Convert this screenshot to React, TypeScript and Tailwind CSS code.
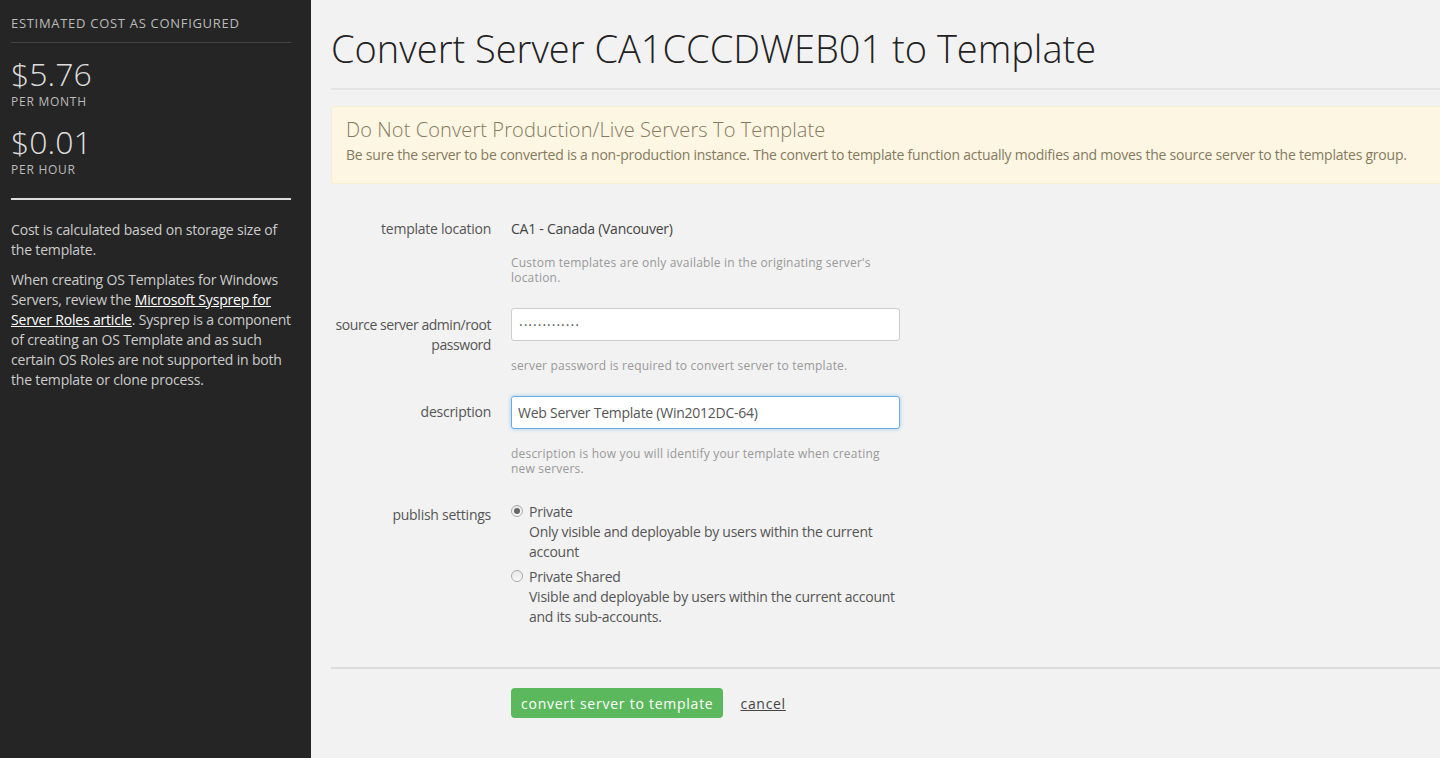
function Radio({ checked }: { checked?: boolean }) {
  return (
    <span className="mt-[3px] flex h-[12px] w-[12px] shrink-0 items-center justify-center rounded-full border border-[#aaa] bg-gradient-to-b from-[#e8e8e8] to-[#fafafa]">
      {checked && <span className="h-[6px] w-[6px] rounded-full bg-[#666]" />}
    </span>
  );
}

export default function App() {
  return (
    <div
      className="flex min-h-[758px] w-full bg-[#f2f2f2] text-[#333]"
      style={{ fontFamily: '"Open Sans", sans-serif' }}
    >
      <aside className="w-[311px] shrink-0 bg-[#252525] px-[11px] pt-[14px] text-[#ccc]">
        <div className="w-[280px]">
          <div className="text-[13px] uppercase leading-[18px] tracking-[0.7px] text-[#bbb]">
            Estimated cost as configured
          </div>
          <div className="mt-[10px] border-t border-[#444]" />
          <div className="mt-[13px] text-[32px] font-light leading-[36px] text-[#ddd]">$5.76</div>
          <div className="mt-[2px] text-[12px] uppercase leading-[16px] tracking-[0.75px] text-[#bbb]">per month</div>
          <div className="mt-[14px] text-[32px] font-light leading-[36px] text-[#ddd]">$0.01</div>
          <div className="mt-[2px] text-[12px] uppercase leading-[16px] tracking-[0.75px] text-[#bbb]">per hour</div>
          <div className="mt-[20px] border-t-2 border-[#ddd]" />
          <p className="mt-[20px] text-[14px] leading-[20px] tracking-[-0.18px]">
            Cost is calculated based on storage size of the template.
          </p>
          <p className="mt-[10px] text-[14px] leading-[20px] tracking-[-0.18px]">
            When creating OS Templates for Windows Servers, review the{" "}
            <a href="#" className="text-white underline">
              Microsoft Sysprep for Server Roles article
            </a>
            . Sysprep is a component of creating an OS Template and as such certain OS Roles are not
            supported in both the template or clone process.
          </p>
        </div>
      </aside>

      <main className="min-w-0 flex-1 overflow-hidden pl-[20px] pt-[24px]">
        <h1 className="text-[38px] font-light leading-[48px] text-[#222]">
          Convert Server CA1CCCDWEB01 to Template
        </h1>
        <div className="mt-[16px] border-t-2 border-[#e4e4e4]" />

        <div className="mt-[16px] rounded-l-[3px] border border-r-0 border-[#f7edcf] bg-[#fcf6e3] px-[14px] pb-[18px] pt-[9px]">
          <div className="text-[20px] font-light leading-[28px] tracking-[0.1px] text-[#857a5e]">
            Do Not Convert Production/Live Servers To Template
          </div>
          <div className="mt-[1px] whitespace-nowrap text-[14px] leading-[20px] tracking-[-0.23px] text-[#857a5e]">
            Be sure the server to be converted is a non-production instance. The convert to template
            function actually modifies and moves the source server to the templates group.
          </div>
        </div>

        <div className="mt-[35px] flex flex-col text-[14px] tracking-[-0.25px]">
          <div className="flex gap-[20px]">
            <div className="w-[160px] shrink-0 text-right leading-[20px] text-[#555]">template location</div>
            <div className="w-[389px]">
              <div className="leading-[20px] text-[#444]">CA1 - Canada (Vancouver)</div>
              <div className="mt-[16px] text-[12px] leading-[15px] tracking-[0.2px] text-[#999]">
                Custom templates are only available in the originating server's location.
              </div>
            </div>
          </div>

          <div className="mt-[23px] flex gap-[20px]">
            <div className="w-[160px] shrink-0 pt-[7px] text-right leading-[20px] tracking-[-0.45px] text-[#555]">
              source server admin/root password
            </div>
            <div className="w-[389px]">
              <input
                type="text"
                readOnly
                value="·············"
                className="h-[33px] w-full rounded-[3px] border border-[#ccc] bg-white px-[7px] text-[14px] tracking-[1px] text-[#555] outline-none"
              />
              <div className="mt-[17px] text-[12px] leading-[15px] tracking-[0.2px] text-[#999]">
                server password is required to convert server to template.
              </div>
            </div>
          </div>

          <div className="mt-[23px] flex gap-[20px]">
            <div className="w-[160px] shrink-0 pt-[6px] text-right leading-[20px] text-[#555]">description</div>
            <div className="w-[389px]">
              <input
                type="text"
                defaultValue="Web Server Template (Win2012DC-64)"
                className="h-[33px] w-full rounded-[3px] border border-[#66afe9] bg-white px-[6px] text-[14px] tracking-[-0.25px] text-[#555] shadow-[0_0_4px_rgba(102,175,233,0.6)] outline-none"
              />
              <div className="mt-[17px] text-[12px] leading-[15px] tracking-[0.2px] text-[#999]">
                description is how you will identify your template when creating new servers.
              </div>
            </div>
          </div>

          <div className="mt-[26px] flex gap-[20px]">
            <div className="w-[160px] shrink-0 pt-[3px] text-right leading-[20px] text-[#555]">publish settings</div>
            <div className="flex w-[389px] flex-col gap-[5px] text-[#555]">
              <label className="flex gap-[6px]">
                <Radio checked />
                <span className="leading-[20px]">
                  Private
                  <br />
                  Only visible and deployable by users within the current account
                </span>
              </label>
              <label className="flex gap-[6px]">
                <Radio />
                <span className="leading-[20px]">
                  Private Shared
                  <br />
                  Visible and deployable by users within the current account and its sub-accounts.
                </span>
              </label>
            </div>
          </div>
        </div>

        <div className="mt-[40px] border-t-2 border-[#ddd]" />

        <div className="mt-[19px] flex items-center gap-[17px] pl-[180px]">
          <button className="h-[30px] rounded-[4px] bg-[#5cb85c] px-[10px] text-[14px] tracking-[0.75px] text-white">
            convert server to template
          </button>
          <a href="#" className="text-[14px] tracking-[0.7px] text-[#444] underline">
            cancel
          </a>
        </div>
      </main>
    </div>
  );
}
